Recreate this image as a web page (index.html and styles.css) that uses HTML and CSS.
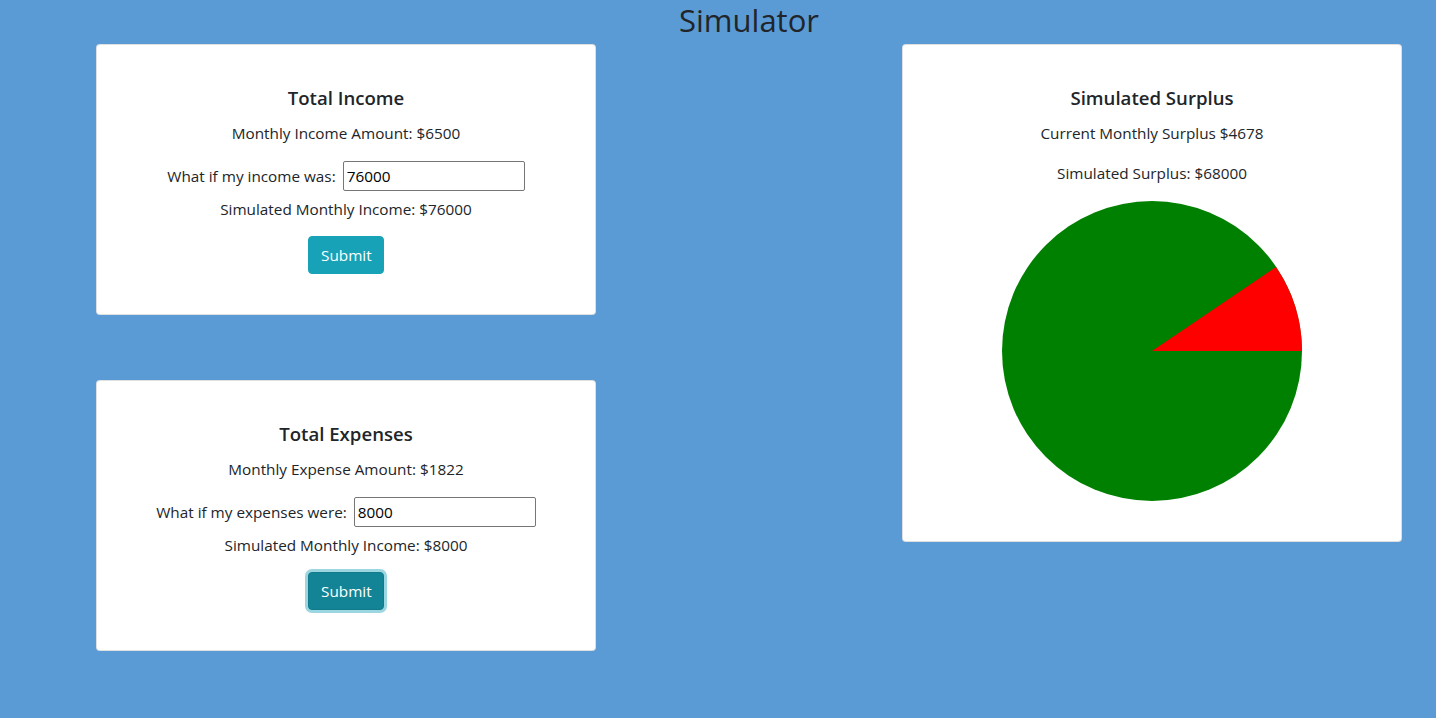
FILE: index.html
```html
<!DOCTYPE html>
<html>
<head>
<meta charset="utf-8">
<title>Simulator</title>
<link rel="stylesheet" href="styles.css">
</head>
<body>
<h2 class="title">Simulator</h2>
<main class="layout">
  <section class="column left">
    <div class="card">
      <h5 class="card-title">Total Income</h5>
      <p class="line">Monthly Income Amount: $6500</p>
      <div class="field">
        <label for="inc">What if my income was:</label>
        <input id="inc" class="input" type="text" value="76000">
      </div>
      <p class="line sim">Simulated Monthly Income: $76000</p>
      <button class="btn">Submit</button>
    </div>
    <div class="card">
      <h5 class="card-title">Total Expenses</h5>
      <p class="line">Monthly Expense Amount: $1822</p>
      <div class="field">
        <label for="exp">What if my expenses were:</label>
        <input id="exp" class="input" type="text" value="8000">
      </div>
      <p class="line sim">Simulated Monthly Income: $8000</p>
      <button class="btn focused">Submit</button>
    </div>
  </section>
  <section class="column right">
    <div class="card surplus">
      <h5 class="card-title">Simulated Surplus</h5>
      <p class="line">Current Monthly Surplus $4678</p>
      <p class="line second">Simulated Surplus: $68000</p>
      <svg class="pie" width="300" height="300" viewBox="0 0 300 300">
        <circle cx="150" cy="150" r="150" fill="#008000"/>
        <path d="M150 150 L300 150 A150 150 0 0 0 274 66 Z" fill="#ff0000"/>
      </svg>
    </div>
  </section>
</main>
</body>
</html>
```
FILE: styles.css
```css
* { box-sizing: border-box; }
html, body {
  margin: 0;
  padding: 0;
  background: #5b9bd5;
  height: 100%;
}
body {
  font-family: "Open Sans", "Noto Sans", sans-serif;
  color: #212529;
  font-size: 15.3px;
  line-height: 1.5;
}
.title {
  margin: 0 0 4px 0;
  padding: 1px 0 0 62px;
  text-align: center;
  font-size: 31px;
  font-weight: 500;
  line-height: 39px;
}
.layout {
  display: flex;
  align-items: flex-start;
  padding-left: 96px;
  gap: 306px;
}
.column {
  display: flex;
  flex-direction: column;
  gap: 65px;
}
.card {
  width: 500px;
  background: #fff;
  border: 1px solid rgba(0,0,0,.125);
  border-radius: 4px;
  display: flex;
  flex-direction: column;
  align-items: center;
  padding: 41px 20px 40px;
}
.card-title {
  margin: 0 0 11px;
  font-size: 18.6px;
  font-weight: 600;
  line-height: 24px;
}
.line {
  margin: 0;
  line-height: 24px;
}
.field {
  display: flex;
  align-items: center;
  gap: 7px;
  margin-top: 16px;
  margin-bottom: 6px;
}
.input {
  width: 182px;
  height: 30px;
  border: 1px solid #767676;
  border-radius: 2px;
  padding: 1px 3px;
  font-family: "Open Sans", "Noto Sans", sans-serif;
  font-size: 15.3px;
  color: #000;
}
.btn {
  margin-top: 15px;
  width: 76px;
  height: 38px;
  border: 1px solid #17a2b8;
  border-radius: 4px;
  background: #17a2b8;
  color: #fff;
  font-family: "Open Sans", "Noto Sans", sans-serif;
  font-size: 15.3px;
  line-height: 24px;
  padding: 6px 12px;
}
.btn.focused {
  background: #138496;
  border-color: #117a8b;
  box-shadow: 0 0 0 3px rgba(58,176,195,.5);
}
.surplus .second {
  margin-top: 16px;
}
.pie {
  display: block;
  margin-top: 16px;
}
```
